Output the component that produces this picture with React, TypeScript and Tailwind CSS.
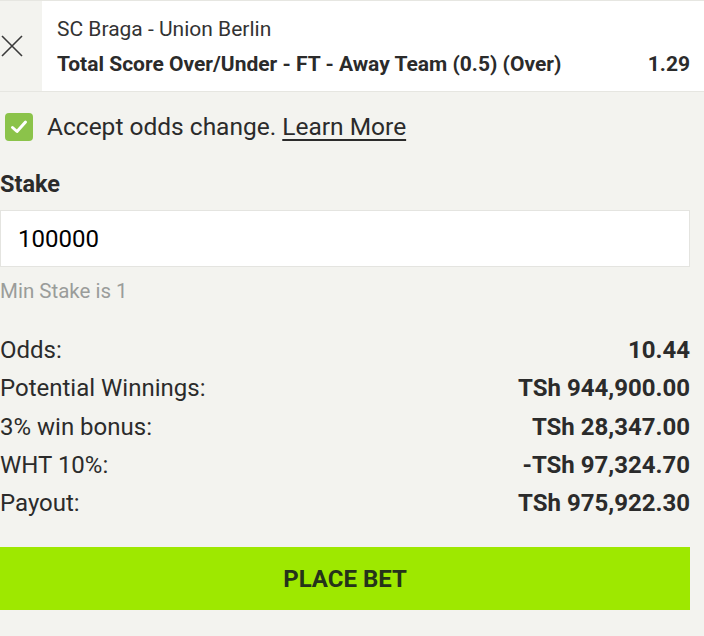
const ROWS = [
  { label: "Odds:", value: "10.44" },
  { label: "Potential Winnings:", value: "TSh 944,900.00" },
  { label: "3% win bonus:", value: "TSh 28,347.00" },
  { label: "WHT 10%:", value: "-TSh 97,324.70" },
  { label: "Payout:", value: "TSh 975,922.30" },
];

export default function App() {
  return (
    <div
      className="min-h-[636px] w-[704px] bg-[#f3f3ef] text-[#2b2b2b]"
      style={{ fontFamily: "Roboto, 'Liberation Sans', sans-serif" }}
    >
      {/* Selection header */}
      <div className="flex h-[92px] border-t border-b border-[#e6e6e1]">
        <div className="flex w-[42px] items-center">
          <svg width="24" height="24" viewBox="0 0 24 24">
            <path d="M2 2 L22 22 M22 2 L2 22" stroke="#3a3a3a" strokeWidth="1.6" fill="none" />
          </svg>
        </div>
        <div className="flex flex-1 flex-col justify-center bg-white pl-[15px] pr-[14px]">
          <div className="text-[21px] leading-[26px] text-[#333]">SC Braga - Union Berlin</div>
          <div className="mt-[9px] flex items-center justify-between text-[21px] font-bold leading-[26px] text-[#2b2b2b]">
            <span>Total Score Over/Under - FT - Away Team (0.5) (Over)</span>
            <span>1.29</span>
          </div>
        </div>
      </div>

      <div className="pr-[14px]">
        {/* Accept odds */}
        <div className="mt-[21px] flex items-center gap-[14px] pl-[5px]">
          <div className="flex h-[28px] w-[28px] items-center justify-center rounded-[4px] bg-[#8bc34a]">
            <svg width="20" height="20" viewBox="0 0 20 20">
              <path d="M3.5 10.5 L8 14.5 L16.5 5" stroke="#fff" strokeWidth="3" fill="none" strokeLinecap="round" strokeLinejoin="round" />
            </svg>
          </div>
          <span className="text-[24.5px] leading-[28px] text-[#2b2b2b]">
            Accept odds change.{" "}
            <span className="underline underline-offset-[4px] decoration-[2px]">Learn More</span>
          </span>
        </div>

        {/* Stake */}
        <div className="mt-[29px] text-[23.5px] font-bold leading-[28px]">Stake</div>
        <div className="mt-[12px] flex h-[57px] items-center border border-[#e4e4e0] bg-white pl-[17px] text-[24px] text-black">
          100000
        </div>
        <div className="mt-[12px] text-[20.5px] leading-[24px] text-[#9a9c9a]">Min Stake is 1</div>

        {/* Summary */}
        <div className="mt-[28px] flex flex-col">
          {ROWS.map((r) => (
            <div key={r.label} className="flex h-[38.3px] items-center justify-between text-[24px]">
              <span>{r.label}</span>
              <span className="font-bold">{r.value}</span>
            </div>
          ))}
        </div>

        <button className="mt-[25px] flex h-[63px] w-full items-center justify-center bg-[#9ee800] text-[24px] font-bold text-[#25331a]">
          PLACE BET
        </button>
      </div>
    </div>
  );
}
